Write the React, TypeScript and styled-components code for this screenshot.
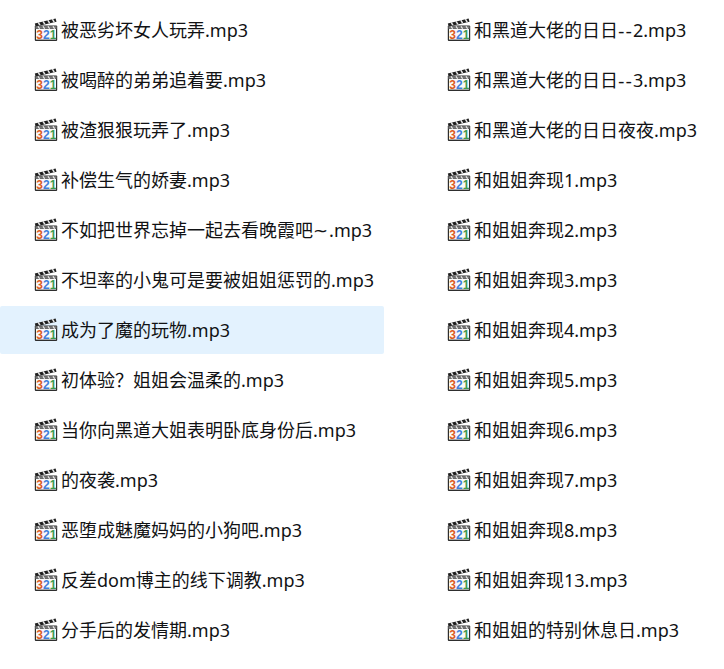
import { createGlobalStyle } from "styled-components";
import styled from "styled-components";

const GlobalStyle = createGlobalStyle`
  html, body {
    margin: 0;
    padding: 0;
    background: #fff;
  }
`;

const Page = styled.div`
  display: grid;
  grid-template-columns: 384px 384px;
  column-gap: 29px;
  padding-top: 6px;
  width: 724px;
  height: 669px;
  overflow: hidden;
  font-family: "Noto Sans", "Noto Sans CJK SC", sans-serif;
`;

const Column = styled.ul`
  display: flex;
  flex-direction: column;
  gap: 2px;
  margin: 0;
  padding: 0;
  list-style: none;
`;

const Row = styled.li<{ $selected?: boolean }>`
  display: flex;
  align-items: center;
  gap: 3px;
  height: 48px;
  padding-left: 34px;
  border-radius: 2px;
  background: ${(p) => (p.$selected ? "#e3f2fe" : "transparent")};
`;

const Name = styled.span`
  font-size: 18px;
  line-height: 24px;
  color: #111214;
  white-space: nowrap;
`;

// hyphens and tildes run wider in the original UI font
const Wide = styled.span`
  font-family: "DejaVu Sans", sans-serif;
  letter-spacing: 1px;
`;

function MediaIcon() {
  return (
    <svg width="24" height="24" viewBox="0 0 24 24">
      {/* clapper arm */}
      <path d="M.8 5.4 21.6.6l.9 3.2L1.7 8.6z" fill="#1f1f1f" />
      <path d="M4.2 4.4l1.8 2.9M9 3.3l1.8 2.9M13.8 2.2l1.8 2.9M18.4 1.2l1.8 2.9" stroke="#e8e8e8" strokeWidth="1.5" />
      {/* board */}
      <rect x=".8" y="7.6" width="22.4" height="15.4" rx="1" fill="#2e2e2e" />
      <path d="M1.4 8.2h21.2v2.6H1.4z" fill="#777" />
      <path d="M4 8.2l1.6 2.6M9 8.2l1.6 2.6M14 8.2l1.6 2.6M19 8.2l1.6 2.6" stroke="#eee" strokeWidth="1.2" />
      <rect x="2" y="11" width="20" height="10.6" fill="#f9f9f9" />
      <text x="2.3" y="20.6" fontFamily="Liberation Sans, sans-serif" fontSize="12" fontWeight="700" fill="#dc5a1e">3</text>
      <text x="9" y="20.6" fontFamily="Liberation Sans, sans-serif" fontSize="12" fontWeight="700" fill="#3f80dc">2</text>
      <text x="15.8" y="20.6" fontFamily="Liberation Sans, sans-serif" fontSize="12" fontWeight="700" fill="#3f9a52">1</text>
    </svg>
  );
}

function FileName({ name }: { name: string }) {
  const parts = name.split(/(--|~)/);
  return (
    <Name>
      {parts.map((part, i) =>
        part === "--" || part === "~" ? <Wide key={i}>{part}</Wide> : part
      )}
    </Name>
  );
}

const leftFiles = [
  "被恶劣坏女人玩弄.mp3",
  "被喝醉的弟弟追着要.mp3",
  "被渣狠狠玩弄了.mp3",
  "补偿生气的娇妻.mp3",
  "不如把世界忘掉一起去看晚霞吧~.mp3",
  "不坦率的小鬼可是要被姐姐惩罚的.mp3",
  "成为了魔的玩物.mp3",
  "初体验\uFF1F姐姐会温柔的.mp3",
  "当你向黑道大姐表明卧底身份后.mp3",
  "的夜袭.mp3",
  "恶堕成魅魔妈妈的小狗吧.mp3",
  "反差dom博主的线下调教.mp3",
  "分手后的发情期.mp3",
];

const rightFiles = [
  "和黑道大佬的日日--2.mp3",
  "和黑道大佬的日日--3.mp3",
  "和黑道大佬的日日夜夜.mp3",
  "和姐姐奔现1.mp3",
  "和姐姐奔现2.mp3",
  "和姐姐奔现3.mp3",
  "和姐姐奔现4.mp3",
  "和姐姐奔现5.mp3",
  "和姐姐奔现6.mp3",
  "和姐姐奔现7.mp3",
  "和姐姐奔现8.mp3",
  "和姐姐奔现13.mp3",
  "和姐姐的特别休息日.mp3",
];

export default function App() {
  return (
    <Page>
      <GlobalStyle />
      <Column>
        {leftFiles.map((name) => (
          <Row key={name} $selected={name.startsWith("成为了魔")}>
            <MediaIcon />
            <FileName name={name} />
          </Row>
        ))}
      </Column>
      <Column>
        {rightFiles.map((name) => (
          <Row key={name}>
            <MediaIcon />
            <FileName name={name} />
          </Row>
        ))}
      </Column>
    </Page>
  );
}
